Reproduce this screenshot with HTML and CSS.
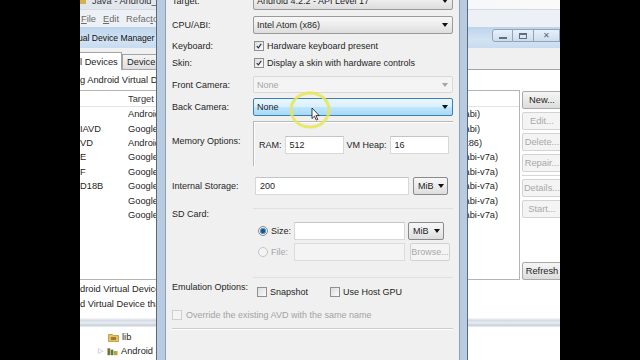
FILE: index.html
```html
<!DOCTYPE html>
<html lang="en">
<head>
    <meta charset="UTF-8">
    <meta name="viewport" content="width=device-width, initial-scale=1.0">
    <title>Edit Android Virtual Device</title>
    <link rel="stylesheet" href="styles.css">
</head>
<body>
<div class="screen">
    <div class="ide-title"><span class="ide-icon"></span><span>Java - Android_Dev</span></div>
    <div class="menubar">
        <span><u>F</u>ile</span>
        <span><u>E</u>dit</span>
        <span>Refac<u>t</u>or</span>
    </div>

    <!-- AVD manager window behind the dialog -->
    <div class="avd">
        <div class="avd-title">
            <span class="avd-name">ual Device Manager</span>
            <div class="win-buttons">
                <span class="wb"><i class="wb-min"></i></span>
                <span class="wb"><i class="wb-max"></i></span>
                <span class="wb wb-close">✕</span>
            </div>
        </div>
        <div class="tabs">
            <span class="tab active">l Devices</span>
            <span class="tab">Device Definitions</span>
        </div>
        <div class="avd-panel">
            <p class="intro">g Android Virtual Devices located at: C:\Users\dev\.android\avd</p>
            <div class="avd-body">
                <div class="avd-table">
                    <div class="thead"><span></span><span>Target Name</span><span>CPU/ABI</span></div>
                    <div class="trow"><span></span><span>Android 4.2.2</span><span>ARM (armeabi)</span></div>
                    <div class="trow"><span>IAVD</span><span>Google APIs</span><span>ARM (armeabi)</span></div>
                    <div class="trow"><span>VD</span><span>Android 4.2.2</span><span>Intel Atom (x86)</span></div>
                    <div class="trow"><span>E</span><span>Google APIs</span><span>ARM (armeabi-v7a)</span></div>
                    <div class="trow"><span>F</span><span>Google APIs</span><span>ARM (armeabi-v7a)</span></div>
                    <div class="trow"><span>D18B</span><span>Google APIs</span><span>ARM (armeabi-v7a)</span></div>
                    <div class="trow"><span></span><span>Google APIs</span><span>ARM (armeabi-v7a)</span></div>
                    <div class="trow"><span></span><span>Google APIs</span><span>ARM (armeabi-v7a)</span></div>
                </div>
                <div class="avd-actions">
                    <button class="btn">New...</button>
                    <button class="btn" disabled>Edit...</button>
                    <button class="btn" disabled>Delete...</button>
                    <button class="btn" disabled>Repair...</button>
                    <div class="sep"></div>
                    <button class="btn" disabled>Details...</button>
                    <button class="btn" disabled>Start...</button>
                    <button class="btn refresh">Refresh</button>
                </div>
            </div>
            <div class="legend">
                <p>droid Virtual Device.</p>
                <p>d Virtual Device that failed to load.</p>
            </div>
        </div>
    </div>
    <div class="sash"></div>
    <div class="explorer">
        <div class="tree-row lvl2">
            <svg class="ticon" viewBox="0 0 11 9"><path d="M0.5 1.5h4l1 1h5v6h-10z" fill="#e8c35a" stroke="#b08a2a" stroke-width="0.7"/><rect x="3" y="4" width="5" height="3" fill="#9a7a3a"/></svg>
            <span>lib</span>
        </div>
        <div class="tree-row">
            <span class="twisty">▷</span>
            <svg class="ticon" viewBox="0 0 12 9"><rect x="0.5" y="1" width="3" height="7.5" fill="#8a6a2a"/><rect x="4" y="2.5" width="3" height="6" fill="#3e8a3e"/><rect x="7.5" y="4" width="4" height="4.5" fill="#c79a3a"/></svg>
            <span>Android 4.2.2</span>
        </div>
    </div>

    <!-- Edit AVD dialog -->
    <div class="dialog">
        <div class="field f-target">
            <label>Target:</label>
            <div class="select"><span>Android 4.2.2 - API Level 17</span><i class="caret"></i></div>
        </div>
        <div class="field f-cpu">
            <label>CPU/ABI:</label>
            <div class="select"><span>Intel Atom (x86)</span><i class="caret"></i></div>
        </div>
        <div class="field f-keyboard">
            <label>Keyboard:</label>
            <div class="check-line">
                <span class="check"><svg viewBox="0 0 10 10"><path d="M2.2 5.2 4.2 7.4 7.8 2.4"/></svg></span>
                <span>Hardware keyboard present</span>
            </div>
        </div>
        <div class="field f-skin">
            <label>Skin:</label>
            <div class="check-line">
                <span class="check"><svg viewBox="0 0 10 10"><path d="M2.2 5.2 4.2 7.4 7.8 2.4"/></svg></span>
                <span>Display a skin with hardware controls</span>
            </div>
        </div>
        <div class="field f-front">
            <label>Front Camera:</label>
            <div class="select disabled"><span>None</span><i class="caret"></i></div>
        </div>
        <div class="field f-back">
            <label>Back Camera:</label>
            <div class="select hot"><span>None</span><i class="caret"></i></div>
        </div>
        <div class="field f-memory">
            <label>Memory Options:</label>
            <div class="group memory">
                <span>RAM:</span>
                <div class="input narrow">512</div>
                <span>VM Heap:</span>
                <div class="input narrow">16</div>
            </div>
        </div>
        <div class="field f-storage">
            <label>Internal Storage:</label>
            <div class="storage">
                <div class="input wide">200</div>
                <div class="select unit"><span>MiB</span><i class="caret"></i></div>
            </div>
        </div>
        <div class="field f-sdcard">
            <label>SD Card:</label>
            <div class="group sdcard">
                <div class="sd-line">
                    <span class="radio on"></span>
                    <span class="radio-label">Size:</span>
                    <div class="input sd"></div>
                    <div class="select unit"><span>MiB</span><i class="caret"></i></div>
                </div>
                <div class="sd-line muted">
                    <span class="radio"></span>
                    <span class="radio-label">File:</span>
                    <div class="input sd disabled"></div>
                    <button class="btn browse" disabled>Browse...</button>
                </div>
            </div>
        </div>
        <div class="field f-emulation">
            <label>Emulation Options:</label>
            <div class="emu">
                <span class="check"></span><span>Snapshot</span>
                <span class="check gpu"></span><span>Use Host GPU</span>
            </div>
        </div>
        <div class="override">
            <span class="check disabled"></span>
            <span>Override the existing AVD with the same name</span>
        </div>
        <div class="separator"></div>
    </div>

    <div class="cursor-ring">
        <svg viewBox="0 0 44 40" width="44" height="40">
            <ellipse cx="22" cy="20" rx="19" ry="17" fill="none" stroke="#e6e655" stroke-opacity="0.85" stroke-width="3"/>
            <path d="M24 18v10.5l2.4-2.3 1.9 3.9 1.5-0.7-1.9-3.8h3.3z" fill="#fff" stroke="#111" stroke-width="0.8"/>
        </svg>
    </div>
</div>
</body>
</html>
```

FILE: styles.css
```css
* {
    box-sizing: border-box;
}

body {
    margin: 0;
    background: #000;
    font-family: "Liberation Sans", Arial, sans-serif;
    color: #1e1e1e;
}

.screen {
    position: relative;
    width: 480px;
    height: 360px;
    margin: 0 auto;
    overflow: hidden;
    background: #fff;
    display: flex;
    flex-direction: column;
    font-size: 9.3px;
}

/* eclipse chrome */
.ide-title {
    height: 9px;
    overflow: hidden;
    display: flex;
    gap: 6px;
    background: linear-gradient(90deg, #dfe5ec, #f3f5f8 60%, #fafafa);
    color: #333;
}

.ide-title span {
    line-height: 10px;
    margin-top: -4px;
}

.ide-icon {
    width: 6px;
    height: 8px;
    background: #d9b04a;
}

.menubar {
    height: 18px;
    display: flex;
    align-items: center;
    gap: 7px;
    padding-left: 1px;
    background: #edf1f5;
    border-top: 1px solid #d5dbe2;
    color: #6a6a6a;
}

/* AVD manager window */
.avd {
    height: 291px;
    display: flex;
    flex-direction: column;
}

.avd-title {
    height: 21px;
    display: flex;
    justify-content: space-between;
    align-items: center;
    background: linear-gradient(#bcd4ec, #d2e3f3 60%, #c8dcf0);
    color: #111;
    font-size: 8.6px;
    white-space: nowrap;
}

.avd-name {
    margin-left: -2px;
}

.win-buttons {
    display: flex;
    align-self: flex-start;
    margin-top: 2px;
}

.wb {
    width: 21px;
    height: 13px;
    display: flex;
    align-items: center;
    justify-content: center;
    border: 1px solid #8fa3bb;
    border-left-width: 0;
    background: linear-gradient(#e9f1f9, #cddcec);
    font-size: 8px;
    color: #566577;
}

.wb:first-child {
    border-left-width: 1px;
    border-radius: 3px 0 0 3px;
}

.wb-close {
    width: 26px;
}

.wb-min {
    width: 8px;
    height: 2px;
    margin-top: 5px;
    background: #5f6f80;
}

.wb-max {
    width: 8px;
    height: 6px;
    border: 1px solid #5f6f80;
    border-top-width: 2px;
}

.tabs {
    height: 22px;
    display: flex;
    align-items: flex-end;
    background: #f0f0f0;
    border-bottom: 1px solid #a0a4ab;
    white-space: nowrap;
}

.tab {
    height: 15px;
    line-height: 14px;
    padding: 0 4px;
    border: 1px solid #a0a4ab;
    border-bottom: none;
    background: linear-gradient(#f5f5f5, #dedede);
}

.tab.active {
    height: 18px;
    line-height: 18px;
    padding-left: 0;
    margin-bottom: -1px;
    width: 42px;
    flex-shrink: 0;
    overflow: hidden;
    background: #fff;
    border-left: none;
}

.avd-panel {
    flex: 1;
    display: flex;
    flex-direction: column;
    background: #fff;
}

.intro {
    margin: 0;
    height: 20px;
    line-height: 20px;
    white-space: nowrap;
}

.avd-body {
    height: 190px;
    display: flex;
    gap: 2px;
}

.avd-table {
    width: 440px;
    flex-shrink: 0;
    border-top: 1px solid #b4b4b4;
    border-right: 1px solid #b4b4b4;
    border-bottom: 1px solid #b4b4b4;
}

.thead,
.trow {
    display: grid;
    grid-template-columns: 48px 289px 1fr;
    align-items: center;
    white-space: nowrap;
}

.thead {
    height: 16px;
    border-bottom: 1px solid #e3e3e3;
    color: #333;
}

.trow {
    height: 14.4px;
}

.avd-actions {
    width: 40px;
    flex-shrink: 0;
    display: flex;
    flex-direction: column;
    gap: 3px;
    padding-top: 1px;
}

.btn {
    height: 18px;
    padding: 0;
    font-family: inherit;
    font-size: 9.3px;
    color: #222;
    border: 1px solid #a9a9a9;
    border-radius: 2px;
    background: linear-gradient(#f6f6f6, #e9e9e9 50%, #dcdcdc);
    white-space: nowrap;
}

.btn:disabled {
    color: #a8a8a8;
    border-color: #d3d3d3;
    background: #f4f4f4;
}

.sep {
    height: 1px;
    background: #d6d6d6;
}

.refresh {
    margin-top: auto;
}

.legend {
    height: 37px;
    padding-top: 2px;
    white-space: nowrap;
}

.legend p {
    margin: 0;
    line-height: 15px;
}

.sash {
    height: 9px;
    background: linear-gradient(#f4f6f8, #d3dbe4 30%, #e9edf2 55%, #c7cfda 80%, #eef1f4);
}

.explorer {
    flex: 1;
    padding-top: 3px;
}

.tree-row {
    height: 14px;
    display: flex;
    align-items: center;
    padding-left: 18px;
    gap: 3px;
}

.tree-row.lvl2 {
    padding-left: 28px;
}

.twisty {
    font-size: 7px;
    color: #9a9a9a;
    margin-right: 1px;
}

.ticon {
    width: 11px;
    height: 9px;
}

/* Edit AVD dialog */
.dialog {
    position: absolute;
    left: 77px;
    top: -12px;
    bottom: -10px;
    width: 310px;
    padding: 2px 7px 0;
    border-left: 8px solid #b8cbe0;
    border-right: 7px solid #b8cbe0;
    box-shadow: -1px 0 0 #5a6a7b, 1px 0 0 #5a6a7b, inset 1px 0 0 #8fa1b5, inset -1px 0 0 #8fa1b5;
    background: #f0f0f0;
    font-size: 9px;
    color: #1e1e1e;
}

.field {
    display: grid;
    grid-template-columns: 81px 200px;
    align-items: center;
}

.field label {
    line-height: 12px;
    white-space: nowrap;
}

.f-target { height: 22px; }
.f-cpu { height: 25px; }
.f-keyboard { height: 18px; }
.f-skin { height: 16px; }
.f-front { height: 27px; }
.f-back { height: 18px; }
.f-storage { height: 38px; }

.f-memory,
.f-sdcard,
.f-emulation {
    align-items: start;
}

.f-memory { height: 51px; }
.f-memory label { padding-top: 19px; }
.f-sdcard { height: 73px; }
.f-sdcard label { padding-top: 3px; }
.f-emulation { height: 27px; }
.f-emulation label { padding-top: 3px; }

.select {
    height: 18px;
    display: flex;
    align-items: center;
    justify-content: space-between;
    padding: 0 4px 0 3px;
    border: 1px solid #9a9a9a;
    border-radius: 2px;
    background: linear-gradient(#f7f7f7, #ececec 50%, #dddddd);
    white-space: nowrap;
}

.f-front .select {
    height: 17px;
}

.caret {
    width: 0;
    height: 0;
    border-left: 3.5px solid transparent;
    border-right: 3.5px solid transparent;
    border-top: 4px solid #111;
}

.select.disabled {
    color: #a6a6a6;
    border-color: #d8d8d8;
    background: #f4f4f4;
}

.select.disabled .caret {
    border-top-color: #a6a6a6;
}

.select.hot {
    border-color: #3c7fb1;
    background: linear-gradient(#eaf6fd, #d9f0fc 48%, #bee6fd 52%, #a7d9f5);
}

.check-line {
    display: flex;
    align-items: center;
    gap: 3px;
    padding-left: 1px;
    white-space: nowrap;
}

.check {
    width: 10px;
    height: 10px;
    flex-shrink: 0;
    border: 1px solid #8e8f8f;
    background: linear-gradient(135deg, #dcdcdc, #fbfbfb);
}

.check svg {
    display: block;
    width: 8px;
    height: 8px;
}

.check path {
    fill: none;
    stroke: #1d2a3a;
    stroke-width: 1.3;
}

.check.disabled {
    border-color: #cfcfcf;
    background: #f4f4f4;
}

.input {
    height: 18px;
    line-height: 16px;
    padding-left: 4px;
    border: 1px solid #d8d8d8;
    border-top-color: #c4c4c4;
    background: #fff;
}

.input.disabled {
    background: #f4f4f4;
    border-color: #dcdcdc;
}

.group.memory {
    margin-top: 5px;
    height: 45px;
    display: flex;
    align-items: flex-start;
    gap: 3px;
    padding: 14px 0 0 5px;
    border-top: 1px solid #b8b8b8;
    border-left: 1px solid #b8b8b8;
    box-shadow: inset 1px 1px 0 #fff;
}

.group.memory span {
    line-height: 18px;
}

.input.narrow {
    width: 59px;
}

.storage {
    display: flex;
    gap: 4px;
    padding-left: 2px;
}

.input.wide {
    width: 154px;
}

.select.unit {
    width: 35px;
    padding: 0 3px 0 4px;
    border-color: #8a8a8a;
}

.group.sdcard {
    margin-top: 3px;
    height: 70px;
    padding: 13px 0 0 5px;
    display: flex;
    flex-direction: column;
    gap: 3px;
    border-top: 1px solid #e0e0e0;
    border-bottom: 1px solid #e0e0e0;
}

.sd-line {
    display: flex;
    align-items: center;
    gap: 3px;
}

.sd-line.muted {
    color: #a6a6a6;
}

.radio {
    width: 10px;
    height: 10px;
    border-radius: 50%;
    border: 1px solid #c4c4c4;
    background: #f4f4f4;
}

.radio.on {
    border-color: #8a8a8a;
    background: radial-gradient(circle, #1a5590 0 1.8px, #5a9ad4 2.4px 2.9px, #f0f0f0 3.4px);
}

.radio-label {
    width: 20px;
}

.input.sd {
    width: 111px;
}

.sd-line .select.unit {
    width: 36px;
}

.btn.browse {
    width: 40px;
    margin-left: 2px;
    font-size: 9px;
}

.emu {
    display: flex;
    align-items: center;
    gap: 3px;
    padding: 9px 0 0 4px;
    line-height: 10px;
}

.check.gpu {
    margin-left: 19px;
}

.override {
    height: 20px;
    display: flex;
    align-items: center;
    gap: 4px;
    color: #a3a3a3;
}

.separator {
    margin-top: 3px;
    width: 281px;
    border-top: 1px solid #cdcdcd;
    border-bottom: 1px solid #fff;
}

/* highlight ring around the mouse pointer */
.cursor-ring {
    position: absolute;
    left: 208px;
    top: 90px;
    width: 44px;
    height: 40px;
}

.cursor-ring svg {
    display: block;
}
```
